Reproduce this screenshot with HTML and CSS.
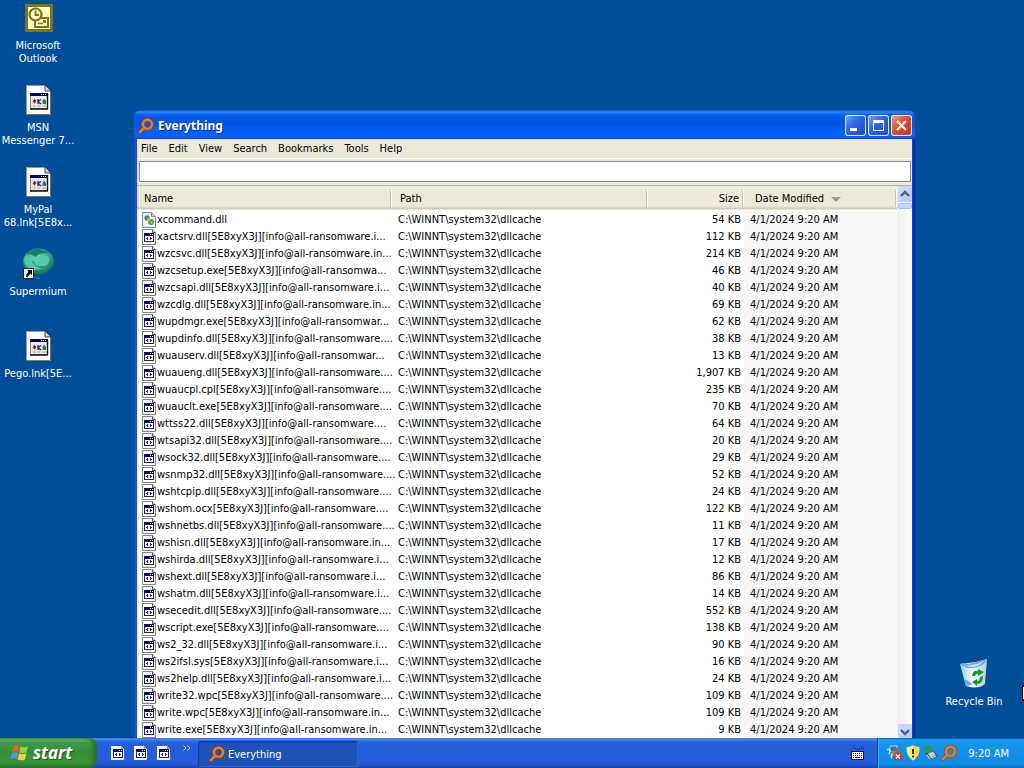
FILE: index.html
```html
<!DOCTYPE html>
<html lang="en">
<head>
    <meta charset="UTF-8">
    <meta name="viewport" content="width=device-width, initial-scale=1.0">
    <title>Everything</title>
    <link rel="stylesheet" href="styles.css">
</head>
<body>
    <!-- Shared icons -->
    <svg class="icon-defs" aria-hidden="true">
        <symbol id="icon-magnifier" viewBox="0 0 16 16">
            <circle cx="9.5" cy="6.3" r="4.6" fill="none" stroke="#9a4510" stroke-width="3.4"/>
            <path d="M6 10 L2 14" stroke="#9a4510" stroke-width="3.4" stroke-linecap="round"/>
            <circle cx="9.5" cy="6.3" r="4.6" fill="none" stroke="#f47c14" stroke-width="2.4"/>
            <path d="M6 10 L2 14" stroke="#f47c14" stroke-width="2.4" stroke-linecap="round"/>
        </symbol>
        <symbol id="icon-file" viewBox="0 0 32 32">
            <path d="M4 1 H23 L29 7 V31 H4 Z" fill="#fff"/>
            <path d="M4.5 31 V1.5 H23" fill="none" stroke="#9c9890"/>
            <path d="M4 30.5 H28.500 V7" fill="none" stroke="#77736b"/>
            <path d="M23 1 V7 H29 Z" fill="#d5dbe4" stroke="#3c4658"/>
            <rect x="8.500" y="9.500" width="17" height="15" fill="#eeebdf" stroke="#8d8a7a"/>
            <path d="M8 25 H26 M25.500 9 V25" fill="none" stroke="#111" stroke-width="1.400"/>
            <rect x="8" y="9" width="17" height="3" fill="#00007b"/>
            <path d="M19 10.500 H20 M21 10.500 H22 M23 10.500 H24" stroke="#fff"/>
            <path d="M12.500 15 L10.500 17 L12.500 20 L14.500 17 Z" fill="#c12727"/>
            <path d="M12 14.500 L13.500 17 L12 18 Z" fill="#21218c"/>
            <path d="M16 15 V20 M19 15.500 L16 17.500 L19 20" stroke="#21218c" stroke-width="1.300" fill="none"/>
            <path d="M22 14.500 L24 17 V20 H20.500 V17 Z" fill="#16855a"/>
            <path d="M11 22 H13.500 M15.500 22 H18.500 M20.500 22 H23.500" stroke="#999"/>
        </symbol>
        <symbol id="icon-file-small" viewBox="0 0 16 16">
            <path d="M.5 .5 H10.500 L13.500 3.500 V15.500 H.5 Z" fill="#fff" stroke="#85837b"/>
            <path d="M10.500 .5 V3.500 H13.500" fill="#ddd" stroke="#44546a"/>
            <rect x="2.500" y="4.500" width="9" height="8" fill="#fff" stroke="#20205c"/>
            <rect x="2" y="4" width="10" height="3" fill="#0a0a6e"/>
            <path d="M8 5.500 H9 M10 5.500 H11" stroke="#fff"/>
            <path d="M4 9 H5 V8 H6 V11 H5 V10 H4 Z M8 8 H9 V9 H10 V10 H9 V11 H8 Z" fill="#24248e"/>
        </symbol>
        <symbol id="icon-dll" viewBox="0 0 16 16">
            <path d="M.5 .5 H9.500 L13.500 4.500 V15.500 H.5 Z" fill="#eef4ff" stroke="#7385a8"/>
            <path d="M9.500 .5 V4.500 H13.500" fill="#b7cdf4" stroke="#7385a8"/>
            <circle cx="5" cy="6" r="2.700" fill="#3f9a63"/>
            <circle cx="9" cy="10" r="2.900" fill="#38a04a"/>
            <circle cx="7" cy="7.500" r="1.800" fill="#e6b62b"/>
            <circle cx="4.500" cy="5.500" r="1" fill="#2f6fc0"/>
            <circle cx="9.500" cy="10.500" r="1" fill="#cfe8bf"/>
        </symbol>
        <symbol id="icon-app" viewBox="0 0 13 14">
            <path d="M0 0 H10 L13 3 V14 H0 Z" fill="#fff"/>
            <path d="M10 0 V3 H13 Z" fill="#7e90bb"/>
            <rect x="2.500" y="3.500" width="9" height="8" fill="#fff" stroke="#20205c"/>
            <rect x="2" y="3" width="10" height="3" fill="#0a0a6e"/>
            <path d="M8 4.500 H9 M10 4.500 H11" stroke="#fff"/>
            <path d="M4 8 H5 V7 H6 V10 H5 V9 H4 Z M8 7 H9 V8 H10 V9 H9 V10 H8 Z" fill="#24248e"/>
        </symbol>
    </svg>

    <main class="desktop">
        <nav class="shortcuts" aria-label="Desktop">
            <a href="#" class="shortcut">
                <svg viewBox="0 0 32 32">
                    <rect x="3" y="2" width="28" height="28" fill="#77761a"/>
                    <rect x="6" y="5" width="22" height="22" fill="#fffbc0"/>
                    <rect x="13" y="16" width="13" height="9" fill="#fffbc0" stroke="#77761a" stroke-width="2"/>
                    <path d="M16 21.500 H21" stroke="#77761a" stroke-width="1.500"/>
                    <rect x="21" y="18" width="3" height="3" fill="#77761a"/>
                    <circle cx="13.500" cy="12.500" r="6" fill="#fffbc0" stroke="#77761a" stroke-width="2.200"/>
                    <path d="M13.500 8.500 V13 H17" fill="none" stroke="#77761a" stroke-width="1.800"/>
                </svg>
                <span>Microsoft Outlook</span>
            </a>
            <a href="#" class="shortcut">
                <svg><use href="#icon-file"/></svg>
                <span>MSN Messenger 7...</span>
            </a>
            <a href="#" class="shortcut">
                <svg><use href="#icon-file"/></svg>
                <span>MyPal 68.lnk[5E8x...</span>
            </a>
            <a href="#" class="shortcut">
                <svg viewBox="0 0 32 32">
                    <defs>
                        <radialGradient id="globe" cx=".45" cy=".35" r=".65">
                            <stop offset="0" stop-color="#6fe6c2"/>
                            <stop offset=".6" stop-color="#2fa88c"/>
                            <stop offset="1" stop-color="#1d5f5a"/>
                        </radialGradient>
                    </defs>
                    <ellipse cx="16.500" cy="13.500" rx="15.500" ry="13" fill="url(#globe)"/>
                    <path d="M4 6 Q15 -4 28 6 Q20 3 13 9 Q8 5 4 6 Z" fill="#1f7a6c"/>
                    <path d="M11 13 Q12 8 17 8 Q24 6 27 10 Q28 17 21 18 Q13 19 11 13 Z" fill="#55cdaa"/>
                    <path d="M3 8 Q9 8 11 14 Q14 20 20 20 Q10 25 4 18 Q1 13 3 8 Z" fill="#4ccaa6"/>
                    <path d="M10.500 13 Q13 19 21 19" fill="none" stroke="#238471" stroke-width="1"/>
                    <path d="M12 29 Q14 31 18 30" fill="none" stroke="#2c83c4" stroke-width="1"/>
                    <rect x="1.500" y="20.500" width="10" height="10" fill="#fff" stroke="#222"/>
                    <path d="M5 22 H10 V27 L8.500 25.500 L5.500 29 L4 29 Q4 26 6.500 23.500 Z" fill="#000"/>
                </svg>
                <span>Supermium</span>
            </a>
            <a href="#" class="shortcut">
                <svg><use href="#icon-file"/></svg>
                <span>Pego.lnk[5E...</span>
            </a>
        </nav>

        <a href="#" class="shortcut recycle-bin">
            <svg viewBox="0 0 32 32">
                <defs>
                    <linearGradient id="bin" x1="0" x2="1">
                        <stop offset="0" stop-color="#9cc8ef"/>
                        <stop offset=".45" stop-color="#f2f9fe"/>
                        <stop offset="1" stop-color="#b5cde3"/>
                    </linearGradient>
                </defs>
                <path d="M2 6 L18 4 L29 1 L27 26 Q20 32 8 28 Z" fill="url(#bin)"/>
                <path d="M2 6 Q6 4 10 6 Q20 4 29 1 Q27 8 16 10 Q7 11 2 6 Z" fill="#75a9d8"/>
                <path d="M5 7 Q14 9 26 3 Q20 9 13 9 Z" fill="#d9ebf8"/>
                <path d="M6 21 L15 26 L8 28 Z" fill="#6ea5df"/>
                <path d="M14 18 Q15 12 20 13 L20 11 L26 14 L20 18 V16 Q18 15 17 18 Z M25 18 Q25 26 19 26 V28 L14 24 L19 21 V23 Q22 23 22 19 Z" fill="#159a2d"/>
            </svg>
            <span>Recycle Bin</span>
        </a>

        <section class="window">
            <header class="title-bar">
                <svg class="app-icon"><use href="#icon-magnifier"/></svg>
                <h1>Everything</h1>
                <div class="window-buttons">
                    <button type="button" aria-label="Minimize">
                        <svg viewBox="0 0 21 21"><rect x="5" y="13" width="7" height="3" fill="#fff"/></svg>
                    </button>
                    <button type="button" aria-label="Maximize">
                        <svg viewBox="0 0 21 21"><path d="M5 5 H16 V16 H5 Z M6 8 V15 H15 V8 Z" fill="#fff" fill-rule="evenodd"/></svg>
                    </button>
                    <button type="button" class="close" aria-label="Close">
                        <svg viewBox="0 0 21 21"><path d="M6 6 L15 15 M15 6 L6 15" stroke="#fff" stroke-width="2.200"/></svg>
                    </button>
                </div>
            </header>

            <div class="menu-bar">
                <button type="button">File</button>
                <button type="button">Edit</button>
                <button type="button">View</button>
                <button type="button">Search</button>
                <button type="button">Bookmarks</button>
                <button type="button">Tools</button>
                <button type="button">Help</button>
            </div>

            <div class="search-bar">
                <input type="text" aria-label="Search">
            </div>

            <div class="results">
                <table>
                    <colgroup>
                        <col class="col-name">
                        <col class="col-path">
                        <col class="col-size">
                        <col class="col-date">
                    </colgroup>
                    <thead>
                        <tr>
                            <th>Name</th>
                            <th>Path</th>
                            <th class="size">Size</th>
                            <th class="date">Date Modified <svg class="sort-arrow" viewBox="0 0 10 5"><path d="M0 0 H10 L5 5 Z" fill="#9d9a88"/></svg></th>
                        </tr>
                    </thead>
                    <tbody id="fileList"></tbody>
                </table>
                <div class="scrollbar">
                    <button type="button" aria-label="Scroll up">
                        <svg viewBox="0 0 14 16"><path d="M3 10 L7 6 L11 10" fill="none" stroke="#4d6185" stroke-width="2.400"/></svg>
                    </button>
                    <div class="thumb"></div>
                    <button type="button" class="down" aria-label="Scroll down">
                        <svg viewBox="0 0 14 16"><path d="M3 6 L7 10 L11 6" fill="none" stroke="#4d6185" stroke-width="2.400"/></svg>
                    </button>
                </div>
            </div>
        </section>

        <svg class="pointer" viewBox="0 0 3 18" aria-hidden="true">
            <path d="M1 0 H3 V16 H1 Z" fill="#000"/>
            <path d="M2 2 H3 V14 H2 Z" fill="#fff"/>
        </svg>
    </main>

    <footer class="taskbar">
        <button type="button" class="start">
            <svg viewBox="0 0 20 20">
                <path d="M3.500 3 Q6.500 1 9.500 3 L8.200 9 Q5.500 7.200 2.200 9 Z" fill="#f0592a"/>
                <path d="M10.500 3.500 Q14 5.200 18 3.200 L16.600 9.300 Q13 11 9.200 9.400 Z" fill="#8bd13c"/>
                <path d="M2 10 Q5 8.500 8 10 L6.600 16 Q4 14.500 .7 16 Z" fill="#5a91f2"/>
                <path d="M9 10.500 Q12.500 12.200 16.400 10.300 L15 16.400 Q11.500 18.200 7.600 16.500 Z" fill="#fbd13a"/>
            </svg>
            start
        </button>

        <div class="quick-launch">
            <button type="button" aria-label="Launch"><svg><use href="#icon-app"/></svg></button>
            <button type="button" aria-label="Launch"><svg><use href="#icon-app"/></svg></button>
            <button type="button" aria-label="Launch"><svg><use href="#icon-app"/></svg></button>
        </div>
        <button type="button" class="more" aria-label="More">
            <svg viewBox="0 0 8 6"><path d="M.5 .5 L3 3 L.5 5.500 M4.500 .5 L7 3 L4.500 5.500" fill="none" stroke="#c3dbff"/></svg>
        </button>

        <button type="button" class="task">
            <svg><use href="#icon-magnifier"/></svg>
            Everything
        </button>

        <button type="button" class="keyboard" aria-label="Keyboard">
            <svg viewBox="0 0 13 13">
                <path d="M2 .5 H3 M4 1.500 H5 M6 2.500 H7 M8 1.500 H9 M10 .5 H11 M12 1.500 H13" stroke="#0c1c50"/>
                <rect x=".5" y="4.500" width="12" height="8" fill="#fff" stroke="#111"/>
                <path d="M2 6.500 H12 M2 8.500 H12" stroke="#111" stroke-dasharray="1 1"/>
                <path d="M2 10.500 H3 M4 10.500 H9 M10 10.500 H11" stroke="#111"/>
            </svg>
        </button>

        <div class="tray">
            <svg viewBox="0 0 16 16">
                <rect x="3" y="1" width="7" height="6" fill="#3c77a0" stroke="#b9d3e0"/>
                <path d="M1 7 L9 6 L12 10 L4 12 Z" fill="#6f8790"/>
                <path d="M0 5 Q2 3 3 6 L2 9 M5 13 Q3 10 6 9" fill="none" stroke="#bfe4ee" stroke-width="1.500"/>
                <circle cx="11" cy="5" r="2.500" fill="#61808a"/>
                <circle cx="11" cy="11.500" r="4.300" fill="#dc3524"/>
                <path d="M9 9.500 L13 13.500 M13 9.500 L9 13.500" stroke="#fff" stroke-width="1.500"/>
            </svg>
            <svg viewBox="0 0 16 16">
                <path d="M8 .8 Q11 2.500 14 2.500 Q14.500 11 8 15.200 Q1.500 11 2 2.500 Q5 2.500 8 .8 Z" fill="#ffd91c" stroke="#e9e3b0"/>
                <path d="M8 1.500 Q5 3 2.500 3 Q2.500 10.500 8 14.500 Z" fill="#fff17b"/>
                <path d="M8 4 V9 M8 10.500 V12.500" stroke="#222" stroke-width="1.800"/>
            </svg>
            <svg viewBox="0 0 16 16">
                <path d="M2 8 L10 5 L15 11 L7 15 Z" fill="#4c6262"/>
                <path d="M5 8.500 L10 6.500 L12.500 10 L7.500 12.500 Z" fill="#b9d5bf"/>
                <path d="M8 13 L13 11 M4 10 L7 14" stroke="#dce8df"/>
                <path d="M1 1 L7 0 L10 4 L7 4 L8 7 L4 8 L4 4 L2 5 Z" fill="#21a33b"/>
            </svg>
            <svg><use href="#icon-magnifier"/></svg>
            <time>9:20 AM</time>
        </div>
    </footer>

    <script>
        // File name and size of every result
        const files = [
            ['xcommand.dll', '54 KB'],
            ['xactsrv.dll[5E8xyX3J][info@all-ransomware.i...', '112 KB'],
            ['wzcsvc.dll[5E8xyX3J][info@all-ransomware.in...', '214 KB'],
            ['wzcsetup.exe[5E8xyX3J][info@all-ransomwa...', '46 KB'],
            ['wzcsapi.dll[5E8xyX3J][info@all-ransomware.i...', '40 KB'],
            ['wzcdlg.dll[5E8xyX3J][info@all-ransomware.in...', '69 KB'],
            ['wupdmgr.exe[5E8xyX3J][info@all-ransomwar...', '62 KB'],
            ['wupdinfo.dll[5E8xyX3J][info@all-ransomware....', '38 KB'],
            ['wuauserv.dll[5E8xyX3J][info@all-ransomwar...', '13 KB'],
            ['wuaueng.dll[5E8xyX3J][info@all-ransomware....', '1,907 KB'],
            ['wuaucpl.cpl[5E8xyX3J][info@all-ransomware....', '235 KB'],
            ['wuauclt.exe[5E8xyX3J][info@all-ransomware....', '70 KB'],
            ['wttss22.dll[5E8xyX3J][info@all-ransomware....', '64 KB'],
            ['wtsapi32.dll[5E8xyX3J][info@all-ransomware....', '20 KB'],
            ['wsock32.dll[5E8xyX3J][info@all-ransomware....', '29 KB'],
            ['wsnmp32.dll[5E8xyX3J][info@all-ransomware....', '52 KB'],
            ['wshtcpip.dll[5E8xyX3J][info@all-ransomware....', '24 KB'],
            ['wshom.ocx[5E8xyX3J][info@all-ransomware....', '122 KB'],
            ['wshnetbs.dll[5E8xyX3J][info@all-ransomware....', '11 KB'],
            ['wshisn.dll[5E8xyX3J][info@all-ransomware.in...', '17 KB'],
            ['wshirda.dll[5E8xyX3J][info@all-ransomware.i...', '12 KB'],
            ['wshext.dll[5E8xyX3J][info@all-ransomware.i...', '86 KB'],
            ['wshatm.dll[5E8xyX3J][info@all-ransomware.i...', '14 KB'],
            ['wsecedit.dll[5E8xyX3J][info@all-ransomware....', '552 KB'],
            ['wscript.exe[5E8xyX3J][info@all-ransomware....', '138 KB'],
            ['ws2_32.dll[5E8xyX3J][info@all-ransomware.i...', '90 KB'],
            ['ws2ifsl.sys[5E8xyX3J][info@all-ransomware.i...', '16 KB'],
            ['ws2help.dll[5E8xyX3J][info@all-ransomware.i...', '24 KB'],
            ['write32.wpc[5E8xyX3J][info@all-ransomware....', '109 KB'],
            ['write.wpc[5E8xyX3J][info@all-ransomware.in...', '109 KB'],
            ['write.exe[5E8xyX3J][info@all-ransomware.in...', '9 KB']
        ];

        const fileList = document.getElementById('fileList');

        fileList.innerHTML = files.map(([name, size], i) => `
            <tr>
                <td><div class="file-name"><svg><use href="#${i === 0 ? 'icon-dll' : 'icon-file-small'}"/></svg>${name}</div></td>
                <td>C:\\WINNT\\system32\\dllcache</td>
                <td class="size">${size}</td>
                <td class="date">4/1/2024 9:20 AM</td>
            </tr>`).join('');
    </script>
</body>
</html>
```

FILE: styles.css
```css
* {
    margin: 0;
    padding: 0;
    box-sizing: border-box;
}

body {
    display: flex;
    flex-direction: column;
    height: 100vh;
    overflow: hidden;
    background: #004e98;
    font-family: Tahoma, "DejaVu Sans Condensed", sans-serif;
    font-size: 11px;
    color: #000;
}

button {
    border: none;
    background: none;
    font: inherit;
    color: inherit;
}

svg {
    display: block;
    flex-shrink: 0;
}

.icon-defs {
    position: absolute;
    width: 0;
    height: 0;
}

/* Desktop */
.desktop {
    position: relative;
    flex: 1;
    min-height: 0;
    overflow: hidden;
}

.shortcuts {
    display: flex;
    flex-direction: column;
    gap: 18px;
    width: 76px;
    padding-top: 2px;
}

.shortcut {
    display: flex;
    flex-direction: column;
    align-items: center;
    gap: 5px;
    height: 64px;
    color: #fff;
    line-height: 13px;
    text-align: center;
    text-decoration: none;
}

.shortcut svg {
    width: 32px;
    height: 32px;
}

.recycle-bin {
    position: absolute;
    right: 12px;
    bottom: 16px;
    width: 76px;
}

.pointer {
    position: absolute;
    right: 0;
    bottom: 35px;
    width: 3px;
    height: 18px;
}

/* Window */
.window {
    position: absolute;
    top: 110px;
    right: 109px;
    bottom: 0;
    left: 134px;
    display: flex;
    flex-direction: column;
    padding: 0 3px;
    border-radius: 7px 7px 0 0;
    background: linear-gradient(90deg, #0831d9, #1663f5 2px, #0540e0 3px, #0540e0 calc(100% - 3px), #0a3fd8 calc(100% - 2px), #001ea0);
}

.title-bar {
    display: flex;
    align-items: center;
    gap: 4px;
    height: 29px;
    margin: 0 -3px;
    padding: 2px 3px 0 4px;
    border-radius: 7px 7px 0 0;
    background: linear-gradient(#0850d8, #2f86fb 2px, #1068f4 4px, #0257e8 7px, #0054e3 14px, #0061fc 22px, #0062ff 26px, #0046d2);
    color: #fff;
}

.title-bar h1 {
    flex: 1;
    font-family: "Trebuchet MS", "Noto Sans", sans-serif;
    font-size: 12px;
    line-height: 18px;
    text-shadow: 1px 1px #0a2a8c;
}

.app-icon {
    width: 16px;
    height: 16px;
}

.window-buttons {
    display: flex;
    gap: 2px;
}

.window-buttons button {
    width: 21px;
    height: 21px;
    border-radius: 3px;
    background: linear-gradient(135deg, #7ba2f5, #2f62e0 45%, #1c49cc);
    box-shadow: inset 0 0 0 1px #e9effc;
}

.window-buttons .close {
    background: linear-gradient(135deg, #f0a08c, #e0502c 45%, #bf3410);
}

.menu-bar {
    display: flex;
    height: 20px;
    padding: 0 4px;
    gap: 11px;
    background: #ece9d8;
    border-bottom: 1px solid #fff;
}

.search-bar {
    padding: 2px 1px 3px 2px;
    background: #ece9d8;
}

.search-bar input {
    display: block;
    width: 100%;
    height: 21px;
    padding: 0 4px;
    border: 1px solid #7e8a96;
    background: #fff;
    font: inherit;
    outline: none;
}

/* Results */
.results {
    display: flex;
    flex: 1;
    min-height: 0;
    border-top: 1px solid #bbb8a8;
    background: #fff;
}

.results table {
    flex: 1;
    align-self: flex-start;
    table-layout: fixed;
    border-collapse: collapse;
    width: 100%;
}

.col-name {
    width: 255px;
}

.col-path {
    width: 256px;
}

.col-size {
    width: 96px;
}

th {
    height: 25px;
    padding: 0 5px 0 8px;
    background: linear-gradient(90deg, transparent calc(100% - 2px), #c7c5b2 calc(100% - 2px), #c7c5b2 calc(100% - 1px), #fff calc(100% - 1px)) no-repeat center / 100% 17px, linear-gradient(#ece9d8 20px, #e2decd 21px, #cbc7b8 23px, #fff 24px);
    font-weight: normal;
    text-align: left;
}

th:first-child {
    padding-left: 7px;
}

td {
    height: 17px;
    padding: 0 3px 0 6px;
    line-height: 15px;
    white-space: nowrap;
}

td:first-child {
    padding: 0 0 0 5px;
}

td.date {
    background: #f7f7f7;
}

.size {
    text-align: right;
}

th.date {
    padding-left: 11px;
}

.sort-arrow {
    display: inline-block;
    width: 10px;
    height: 5px;
    margin-left: 4px;
    vertical-align: middle;
}

.file-name {
    display: flex;
    align-items: center;
}

.file-name svg {
    width: 16px;
    height: 16px;
    margin-right: -1px;
}

.scrollbar {
    display: flex;
    flex-direction: column;
    gap: 1px;
    width: 15px;
    padding-left: 1px;
    background: linear-gradient(90deg, #f0f0e8, #fefefb);
}

.scrollbar button {
    height: 16px;
    border-radius: 2px;
    background: linear-gradient(135deg, #d3dffc, #b3c7f5);
    box-shadow: inset 0 0 0 1px #c6d3f5;
}

.scrollbar svg {
    width: 14px;
    height: 16px;
}

.thumb {
    height: 6px;
    border: 1px solid #a9bdf0;
    border-radius: 2px;
    background: #c6d6fb;
}

.scrollbar .down {
    height: 14px;
    margin-top: auto;
}

/* Taskbar */
.taskbar {
    display: flex;
    align-items: center;
    height: 30px;
    background: linear-gradient(#3168d5, #4993e6 1px, #2d6be0 3px, #245edb 6px, #245edb 24px, #1f50c2 28px, #1941a5);
    color: #fff;
}

.start {
    display: flex;
    align-items: center;
    gap: 3px;
    width: 97px;
    height: 30px;
    padding: 0 0 1px 10px;
    border-radius: 0 8px 8px 0;
    background: linear-gradient(#4a9a4a, #6cbb66 2px, #3e9a3e 5px, #388e38 14px, #3a973a 24px, #2c7a2c);
    box-shadow: inset -4px 0 5px #256d2a;
    font-family: "Franklin Gothic Medium", "Noto Sans", sans-serif;
    font-size: 17px;
    font-style: italic;
    font-weight: bold;
    text-shadow: 1px 1px 1px #1d4a1d;
}

.start svg {
    width: 20px;
    height: 20px;
}

.quick-launch {
    display: flex;
    gap: 10px;
    margin-left: 14px;
}

.quick-launch svg {
    width: 13px;
    height: 14px;
}

.more {
    align-self: flex-start;
    margin: 7px 0 0 13px;
}

.more svg {
    width: 8px;
    height: 6px;
}

.task {
    display: flex;
    align-items: center;
    gap: 3px;
    width: 160px;
    height: 26px;
    margin: 2px 0 0 7px;
    padding-left: 11px;
    border-radius: 2px;
    background: #1d52b8;
    box-shadow: inset 1px 1px 1px #123a8f, inset -1px -1px #2c63cc;
}

.task svg {
    width: 16px;
    height: 16px;
}

.keyboard {
    margin: 1px 13px 0 auto;
}

.keyboard svg {
    width: 13px;
    height: 13px;
}

.tray {
    display: flex;
    align-items: center;
    gap: 2px;
    height: 30px;
    padding: 0 15px 0 9px;
    border-left: 1px solid #103e9c;
    background: linear-gradient(#0c59b9, #1fa2ee 2px, #1596eb 5px, #128de8 20px, #1290e8 26px, #0d6ab8);
    box-shadow: inset 1px 0 #2fb4f5;
}

.tray svg {
    width: 16px;
    height: 16px;
}

.tray time {
    margin-left: 9px;
}
```
